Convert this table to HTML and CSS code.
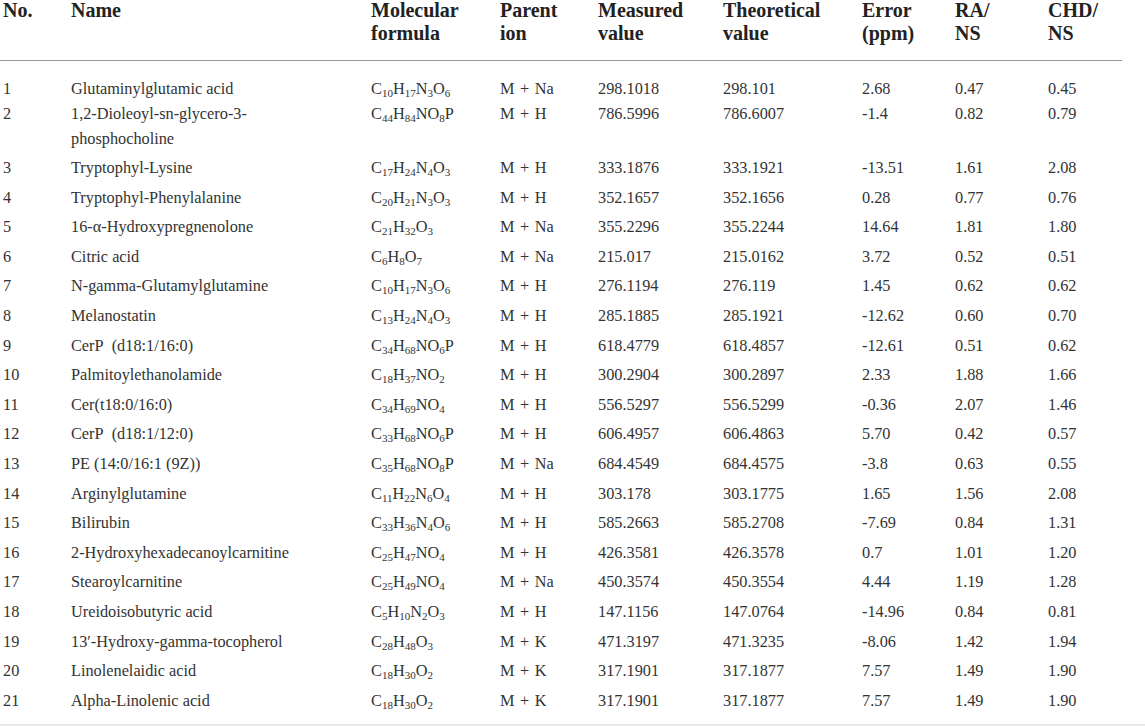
FILE: index.html
```html
<!DOCTYPE html>
<html lang="en">
<head>
  <meta charset="UTF-8">
  <title>Differential metabolites</title>
  <link rel="stylesheet" href="styles.css">
</head>
<body>

  <div class="table-wrap">
    <table class="data-table">
      <colgroup>
        <col class="c-no">
        <col class="c-name">
        <col class="c-formula">
        <col class="c-ion">
        <col class="c-measured">
        <col class="c-theory">
        <col class="c-error">
        <col class="c-ra">
        <col class="c-chd">
      </colgroup>
      <thead>
        <tr>
          <th>No.</th>
          <th>Name</th>
          <th>Molecular<br>formula</th>
          <th>Parent<br>ion</th>
          <th>Measured<br>value</th>
          <th>Theoretical<br>value</th>
          <th>Error<br>(ppm)</th>
          <th>RA/<br>NS</th>
          <th>CHD/<br>NS</th>
        </tr>
      </thead>
      <tbody>
        <tr class="first">
          <td>1</td><td>Glutaminylglutamic acid</td>
          <td>C<sub>10</sub>H<sub>17</sub>N<sub>3</sub>O<sub>6</sub></td>
          <td class="ion">M + Na</td><td>298.1018</td><td>298.101</td><td>2.68</td><td>0.47</td><td>0.45</td>
        </tr>
        <tr class="second">
          <td>2</td><td>1,2-Dioleoyl-sn-glycero-3-<br>phosphocholine</td>
          <td>C<sub>44</sub>H<sub>84</sub>NO<sub>8</sub>P</td>
          <td class="ion">M + H</td><td>786.5996</td><td>786.6007</td><td>-1.4</td><td>0.82</td><td>0.79</td>
        </tr>
        <tr>
          <td>3</td><td>Tryptophyl-Lysine</td>
          <td>C<sub>17</sub>H<sub>24</sub>N<sub>4</sub>O<sub>3</sub></td>
          <td class="ion">M + H</td><td>333.1876</td><td>333.1921</td><td>-13.51</td><td>1.61</td><td>2.08</td>
        </tr>
        <tr>
          <td>4</td><td>Tryptophyl-Phenylalanine</td>
          <td>C<sub>20</sub>H<sub>21</sub>N<sub>3</sub>O<sub>3</sub></td>
          <td class="ion">M + H</td><td>352.1657</td><td>352.1656</td><td>0.28</td><td>0.77</td><td>0.76</td>
        </tr>
        <tr>
          <td>5</td><td>16-α-Hydroxypregnenolone</td>
          <td>C<sub>21</sub>H<sub>32</sub>O<sub>3</sub></td>
          <td class="ion">M + Na</td><td>355.2296</td><td>355.2244</td><td>14.64</td><td>1.81</td><td>1.80</td>
        </tr>
        <tr>
          <td>6</td><td>Citric acid</td>
          <td>C<sub>6</sub>H<sub>8</sub>O<sub>7</sub></td>
          <td class="ion">M + Na</td><td>215.017</td><td>215.0162</td><td>3.72</td><td>0.52</td><td>0.51</td>
        </tr>
        <tr>
          <td>7</td><td>N-gamma-Glutamylglutamine</td>
          <td>C<sub>10</sub>H<sub>17</sub>N<sub>3</sub>O<sub>6</sub></td>
          <td class="ion">M + H</td><td>276.1194</td><td>276.119</td><td>1.45</td><td>0.62</td><td>0.62</td>
        </tr>
        <tr>
          <td>8</td><td>Melanostatin</td>
          <td>C<sub>13</sub>H<sub>24</sub>N<sub>4</sub>O<sub>3</sub></td>
          <td class="ion">M + H</td><td>285.1885</td><td>285.1921</td><td>-12.62</td><td>0.60</td><td>0.70</td>
        </tr>
        <tr>
          <td>9</td><td>CerP&nbsp; (d18:1/16:0)</td>
          <td>C<sub>34</sub>H<sub>68</sub>NO<sub>6</sub>P</td>
          <td class="ion">M + H</td><td>618.4779</td><td>618.4857</td><td>-12.61</td><td>0.51</td><td>0.62</td>
        </tr>
        <tr>
          <td>10</td><td>Palmitoylethanolamide</td>
          <td>C<sub>18</sub>H<sub>37</sub>NO<sub>2</sub></td>
          <td class="ion">M + H</td><td>300.2904</td><td>300.2897</td><td>2.33</td><td>1.88</td><td>1.66</td>
        </tr>
        <tr>
          <td>11</td><td>Cer(t18:0/16:0)</td>
          <td>C<sub>34</sub>H<sub>69</sub>NO<sub>4</sub></td>
          <td class="ion">M + H</td><td>556.5297</td><td>556.5299</td><td>-0.36</td><td>2.07</td><td>1.46</td>
        </tr>
        <tr>
          <td>12</td><td>CerP&nbsp; (d18:1/12:0)</td>
          <td>C<sub>33</sub>H<sub>68</sub>NO<sub>6</sub>P</td>
          <td class="ion">M + H</td><td>606.4957</td><td>606.4863</td><td>5.70</td><td>0.42</td><td>0.57</td>
        </tr>
        <tr>
          <td>13</td><td>PE (14:0/16:1 (9Z))</td>
          <td>C<sub>35</sub>H<sub>68</sub>NO<sub>8</sub>P</td>
          <td class="ion">M + Na</td><td>684.4549</td><td>684.4575</td><td>-3.8</td><td>0.63</td><td>0.55</td>
        </tr>
        <tr>
          <td>14</td><td>Arginylglutamine</td>
          <td>C<sub>11</sub>H<sub>22</sub>N<sub>6</sub>O<sub>4</sub></td>
          <td class="ion">M + H</td><td>303.178</td><td>303.1775</td><td>1.65</td><td>1.56</td><td>2.08</td>
        </tr>
        <tr>
          <td>15</td><td>Bilirubin</td>
          <td>C<sub>33</sub>H<sub>36</sub>N<sub>4</sub>O<sub>6</sub></td>
          <td class="ion">M + H</td><td>585.2663</td><td>585.2708</td><td>-7.69</td><td>0.84</td><td>1.31</td>
        </tr>
        <tr>
          <td>16</td><td>2-Hydroxyhexadecanoylcarnitine</td>
          <td>C<sub>25</sub>H<sub>47</sub>NO<sub>4</sub></td>
          <td class="ion">M + H</td><td>426.3581</td><td>426.3578</td><td>0.7</td><td>1.01</td><td>1.20</td>
        </tr>
        <tr>
          <td>17</td><td>Stearoylcarnitine</td>
          <td>C<sub>25</sub>H<sub>49</sub>NO<sub>4</sub></td>
          <td class="ion">M + Na</td><td>450.3574</td><td>450.3554</td><td>4.44</td><td>1.19</td><td>1.28</td>
        </tr>
        <tr>
          <td>18</td><td>Ureidoisobutyric acid</td>
          <td>C<sub>5</sub>H<sub>10</sub>N<sub>2</sub>O<sub>3</sub></td>
          <td class="ion">M + H</td><td>147.1156</td><td>147.0764</td><td>-14.96</td><td>0.84</td><td>0.81</td>
        </tr>
        <tr>
          <td>19</td><td>13′-Hydroxy-gamma-tocopherol</td>
          <td>C<sub>28</sub>H<sub>48</sub>O<sub>3</sub></td>
          <td class="ion">M + K</td><td>471.3197</td><td>471.3235</td><td>-8.06</td><td>1.42</td><td>1.94</td>
        </tr>
        <tr>
          <td>20</td><td>Linolenelaidic acid</td>
          <td>C<sub>18</sub>H<sub>30</sub>O<sub>2</sub></td>
          <td class="ion">M + K</td><td>317.1901</td><td>317.1877</td><td>7.57</td><td>1.49</td><td>1.90</td>
        </tr>
        <tr>
          <td>21</td><td>Alpha-Linolenic acid</td>
          <td>C<sub>18</sub>H<sub>30</sub>O<sub>2</sub></td>
          <td class="ion">M + K</td><td>317.1901</td><td>317.1877</td><td>7.57</td><td>1.49</td><td>1.90</td>
        </tr>
      </tbody>
    </table>
  </div>

</body>
</html>
```

FILE: styles.css
```css
body {
  font-family: 'Liberation Serif', 'Times New Roman', serif;
  background-color: #fff;
  color: #333;
  margin: 0;
  padding: 0;
}

.table-wrap {
  margin-top: -1px;
  padding-bottom: 9px;
  border-bottom: 2px solid #e8e8e8;
}

.data-table {
  width: 1122px;
  table-layout: fixed;
  border-collapse: collapse;
}

.c-no { width: 71px; }
.c-name { width: 300px; }
.c-formula { width: 129px; }
.c-ion { width: 98px; }
.c-measured { width: 125px; }
.c-theory { width: 139px; }
.c-error { width: 93px; }
.c-ra { width: 93px; }
.c-chd { width: 74px; }

.data-table th {
  font-size: 20px;
  font-weight: bold;
  line-height: 23px;
  text-align: left;
  vertical-align: top;
  padding: 0 0 15px 0;
  border-bottom: 1px solid #999;
  color: #222;
}

.data-table td {
  font-size: 16.3px;
  line-height: 25px;
  text-align: left;
  vertical-align: top;
  padding: 2.3px 0;
  white-space: nowrap;
}

.data-table td.ion {
  word-spacing: 1.5px;
}

.data-table th:first-child,
.data-table td:first-child {
  padding-left: 3px;
}

.data-table tr.first td {
  padding-top: 14.5px;
  padding-bottom: 0;
}

.data-table tr.second td {
  padding-top: 0;
}

.data-table sub {
  font-size: 11px;
  line-height: 0;
  vertical-align: -3px;
}
```
